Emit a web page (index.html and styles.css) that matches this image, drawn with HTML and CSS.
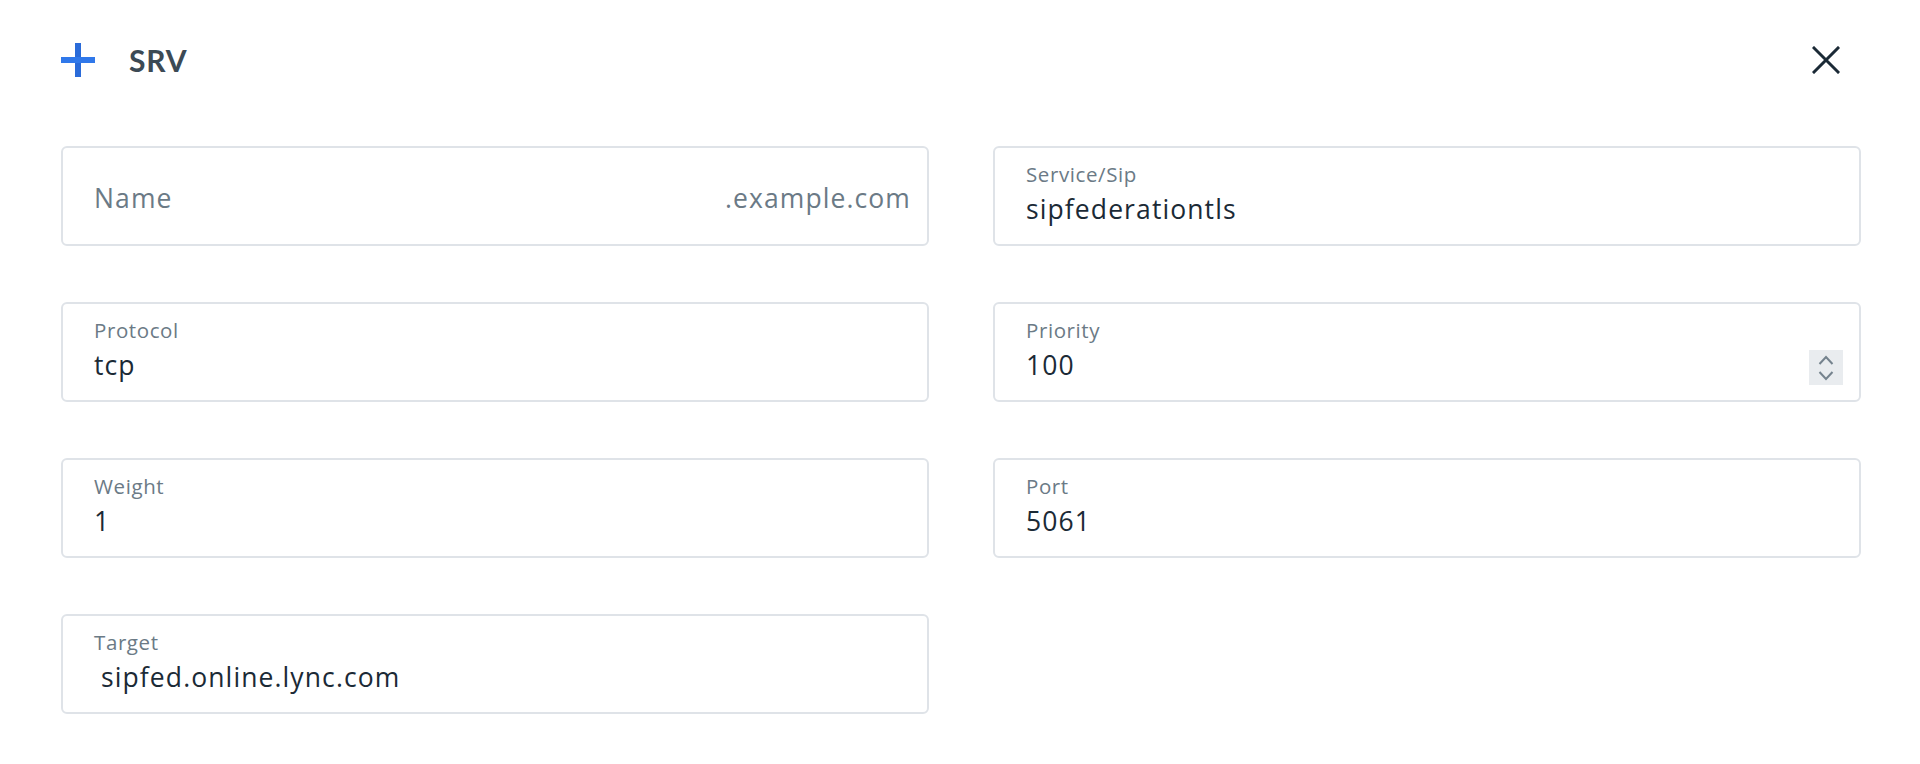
FILE: index.html
```html
<!DOCTYPE html>
<html lang="en">
<head>
<meta charset="utf-8">
<title>SRV</title>
<link rel="stylesheet" href="styles.css">
</head>
<body>
<div class="modal">
  <div class="header">
    <div class="title-group">
      <svg class="plus" width="34" height="34" viewBox="0 0 34 34" aria-hidden="true">
        <rect x="14" y="0" width="6" height="34" fill="#2a6bd9"/>
        <rect x="0" y="14" width="34" height="6" fill="#3078ea"/>
      </svg>
      <h1 class="title">SRV</h1>
    </div>
    <button class="close" aria-label="Close">
      <svg width="28" height="28" viewBox="0 0 28 28" aria-hidden="true">
        <path d="M2 2 L26 26 M26 2 L2 26" stroke="#1b2a36" stroke-width="3" stroke-linecap="square"/>
      </svg>
    </button>
  </div>
  <div class="grid">
    <div class="field field-name">
      <span class="placeholder">Name</span>
      <span class="suffix">.example.com</span>
    </div>
    <div class="field">
      <div class="label">Service/Sip</div>
      <div class="value">sipfederationtls</div>
    </div>
    <div class="field">
      <div class="label">Protocol</div>
      <div class="value">tcp</div>
    </div>
    <div class="field field-number">
      <div class="field-body">
        <div class="label">Priority</div>
        <div class="value">100</div>
      </div>
      <div class="spinner">
        <svg width="34" height="35" viewBox="0 0 34 35" aria-hidden="true">
          <path d="M10.5 14 L17 7 L23.5 14" fill="none" stroke="#75838e" stroke-width="2"/>
          <path d="M10.5 22 L17 29 L23.5 22" fill="none" stroke="#75838e" stroke-width="2"/>
        </svg>
      </div>
    </div>
    <div class="field">
      <div class="label">Weight</div>
      <div class="value">1</div>
    </div>
    <div class="field">
      <div class="label">Port</div>
      <div class="value">5061</div>
    </div>
    <div class="field">
      <div class="label">Target</div>
      <div class="value value-indent">sipfed.online.lync.com</div>
    </div>
  </div>
</div>
</body>
</html>
```

FILE: styles.css
```css
* { box-sizing: border-box; }

html, body {
  margin: 0;
  padding: 0;
  background: #ffffff;
  font-family: "Open Sans", "Liberation Sans", sans-serif;
}

.modal {
  width: 1920px;
  height: 764px;
}

.header {
  display: flex;
  align-items: center;
  justify-content: space-between;
  padding: 43px 80px 0 61px;
  height: 77px;
}

.title-group {
  display: flex;
  align-items: center;
  gap: 34px;
}

.plus { display: block; }

.title {
  margin: 0;
  font-family: "Lato", "Open Sans", sans-serif;
  font-size: 30px;
  font-weight: 700;
  color: #3c4a55;
  letter-spacing: 0.9px;
  line-height: 34px;
}

.close {
  border: 0;
  background: none;
  padding: 0;
  width: 28px;
  height: 28px;
  display: block;
}
.close svg { display: block; }

.grid {
  display: grid;
  grid-template-columns: 1fr 1fr;
  column-gap: 64px;
  row-gap: 56px;
  padding: 69px 59px 0 61px;
  grid-auto-rows: 100px;
}

.field {
  border: 2px solid #dfe3e8;
  border-radius: 6px;
  padding: 14px 16px 0 31px;
  background: #fff;
}

.label {
  font-size: 20.5px;
  line-height: 25px;
  color: #6b7a86;
  letter-spacing: 0.6px;
}

.value {
  margin-top: 7px;
  font-size: 26.5px;
  line-height: 30px;
  color: #1b2a36;
  letter-spacing: 1.1px;
}

.value-indent { padding-left: 7px; }

.field-name {
  display: flex;
  align-items: center;
  justify-content: space-between;
  padding-top: 4px;
}
.placeholder, .suffix {
  font-size: 26.5px;
  color: #6b7a86;
  letter-spacing: 1.1px;
}

.field-number {
  display: flex;
  justify-content: space-between;
  align-items: flex-start;
}

.spinner {
  margin-top: 32px;
  width: 34px;
  height: 35px;
  background: #e9ecef;
}
.spinner svg { display: block; }
```
